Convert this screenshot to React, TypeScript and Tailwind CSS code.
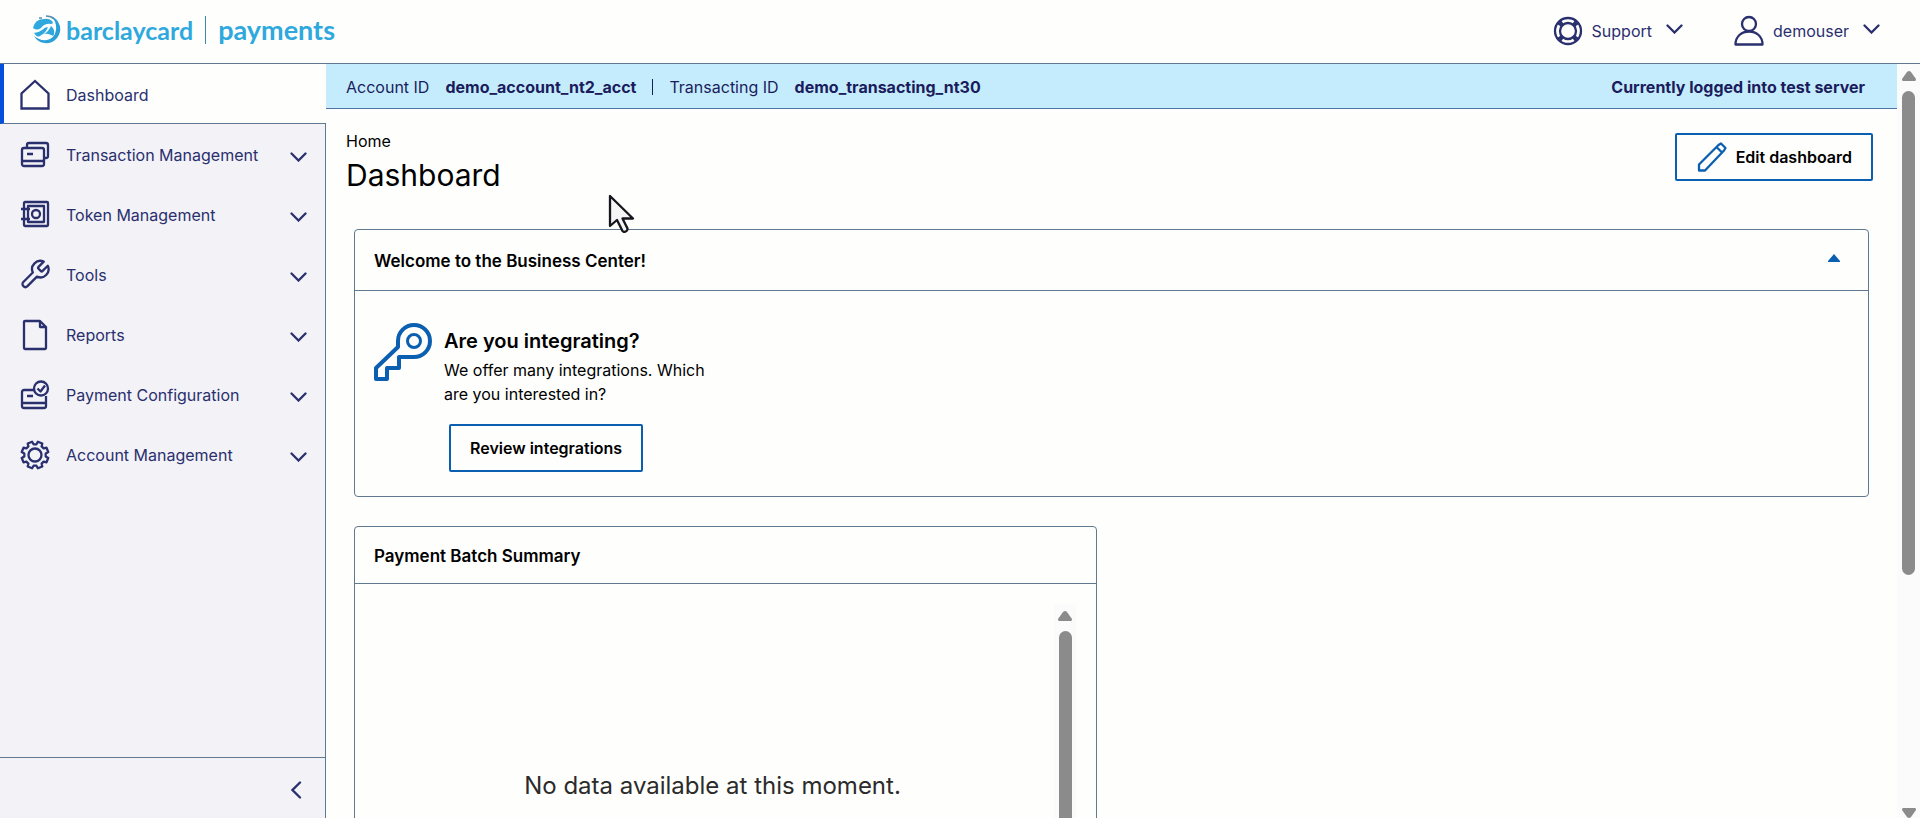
import { useState } from 'react';
import type { ReactNode } from 'react';

function Icon({ children, className = 'h-8 w-8' }: { children: ReactNode; className?: string }) {
  return (
    <svg
      viewBox="0 0 32 32"
      className={className}
      fill="none"
      stroke="currentColor"
      strokeWidth="2.3"
      strokeLinejoin="round"
      aria-hidden="true"
    >
      {children}
    </svg>
  );
}

function Chevron({ className = 'h-2 w-4' }: { className?: string }) {
  return (
    <svg
      viewBox="0 0 17 10"
      className={className}
      fill="none"
      stroke="currentColor"
      strokeWidth="2.3"
      strokeLinecap="round"
      aria-hidden="true"
    >
      <path d="M1.5 1.5l7 7 7-7" />
    </svg>
  );
}

// outline of an eight-tooth gear centred in a 32x32 box
function gearPoints() {
  const points: string[] = [];
  for (let i = 0; i < 8; i++) {
    const middle = 22.5 + i * 45;
    const corners = [
      [-15, 10.8],
      [-10, 13.6],
      [10, 13.6],
      [15, 10.8],
    ];
    corners.forEach(([offset, radius]) => {
      const angle = ((middle + offset) * Math.PI) / 180;
      points.push(`${(16 + radius * Math.sin(angle)).toFixed(1)},${(16 - radius * Math.cos(angle)).toFixed(1)}`);
    });
  }
  return points.join(' ');
}

const navItems = [
  {
    label: 'Transaction Management',
    icon: (
      <>
        <rect x="3" y="9" width="22" height="18" rx="2" />
        <path d="M3 22h22M8 15h6M8 9V6a2 2 0 0 1 2-2h17a2 2 0 0 1 2 2v11a2 2 0 0 1-2 2h-2" />
      </>
    ),
  },
  {
    label: 'Token Management',
    icon: (
      <>
        <rect x="5" y="3" width="24" height="24" rx="1" />
        <rect x="9" y="7" width="16" height="16" />
        <circle cx="17" cy="15" r="4" />
        <path d="M2 10h9M2 20h9" />
      </>
    ),
  },
  {
    label: 'Tools',
    icon: (
      <path
        d="M14.7 6.3a1 1 0 0 0 0 1.4l1.6 1.6a1 1 0 0 0 1.4 0l3.77-3.77a6 6 0 0 1-7.94 7.94l-6.91 6.91a2.12 2.12 0 0 1-3-3l6.91-6.91a6 6 0 0 1 7.94-7.94l-3.76 3.76z"
        transform="translate(-.6 -.8) scale(1.37)"
        strokeWidth="1.7"
      />
    ),
  },
  {
    label: 'Reports',
    icon: <path d="M21 2H6a1 1 0 0 0-1 1v26a1 1 0 0 0 1 1h20a1 1 0 0 0 1-1V8zM21 2v6h6" />,
  },
  {
    label: 'Payment Configuration',
    icon: (
      <>
        <path d="M15 11H5a2 2 0 0 0-2 2v14a2 2 0 0 0 2 2h20a2 2 0 0 0 2-2V17M3 24h24M8 17h6" />
        <circle cx="22" cy="9.5" r="7" />
        <path d="M18.5 9.5l3 3 4.5-6" />
      </>
    ),
  },
  {
    label: 'Account Management',
    icon: (
      <>
        <circle cx="16" cy="16" r="6.5" />
        <polygon points={gearPoints()} />
      </>
    ),
  },
];

function Logo() {
  return (
    <a href="#" className="flex items-center font-[Lato,sans-serif] leading-8 font-bold text-[#2fa9dd]">
      <svg viewBox="0 0 30 30" className="mr-1 h-[30px] w-[30px]" aria-hidden="true">
        <path d="M19 1a14 14 0 1 1-17 20q6 5 13 4 8-2 9-10Q25 7 19 1z" fill="#2a9fd8" />
        <path d="M1 13Q3 4 12 4q5-1 8 2 2 3-1 3-6-1-10 4-4 3-8 0z" fill="#2fa9dd" />
        <path d="M2 18q4 0 8-3 3-3 6-3-2 6-8 9-3 2-6-3z" fill="#2fa9dd" />
        <path d="M19 11q4 3 3 8 0 3-3 1-4-2-7-1 5-3 7-8z" fill="#2fa9dd" />
        <path d="M7 3h3M14 1q5 0 8 3" stroke="#5c8daf" strokeWidth="1.5" fill="none" />
      </svg>
      <span className="text-[25px]">barclaycard</span>
      <span className="mx-3 h-7 w-px bg-[#3f86ad]" />
      <span className="text-[27px]">payments</span>
    </a>
  );
}

function ScrollTrack({ className, thumb, down }: { className: string; thumb: string; down?: boolean }) {
  return (
    <div className={`flex flex-col items-center bg-[#fbfbfc] pt-[7px] text-[#8b8b8b] ${className}`} aria-hidden="true">
      <svg viewBox="0 0 14 10" className="h-[10px] w-[14px] shrink-0" fill="currentColor">
        <path d="M7 0q1 0 2 1l5 7q0 2-1 2H1Q0 10 0 8l5-7q1-1 2-1z" />
      </svg>
      <div className={`mt-[10px] w-[13px] rounded-full bg-[#8b8b8b] ${thumb}`} />
      {down && (
        <svg viewBox="0 0 14 10" className="mt-auto h-[10px] w-[14px] shrink-0" fill="currentColor">
          <path d="M7 10q1 0 2-1l5-7q0-2-1-2H1Q0 0 0 2l5 7q1 1 2 1z" />
        </svg>
      )}
    </div>
  );
}

export default function App() {
  const [welcomeOpen, setWelcomeOpen] = useState(true);

  return (
    <div className="relative flex h-screen flex-col overflow-hidden bg-[#fefefd] font-[Inter,sans-serif] text-base text-black">
      <header className="flex h-16 shrink-0 items-center justify-between border-b border-[#5f7991] pr-10 pb-1 pl-8">
        <Logo />
        <div className="flex items-center gap-[50px] pt-0.5 text-[#2a2f6e]">
          <button className="flex items-center gap-2">
            <Icon>
              <circle cx="16" cy="16" r="13" />
              <circle cx="16" cy="16" r="8" />
              <path d="M6 8l4 3M8 6l3 4M26 8l-4 3M24 6l-3 4M6 24l4-3M8 26l3-4M26 24l-4-3M24 26l-3-4" />
            </Icon>
            Support
            <Chevron className="mb-1 ml-1.5 h-[10px] w-[17px]" />
          </button>
          <button className="flex items-center gap-2">
            <Icon>
              <circle cx="16" cy="9" r="7" />
              <path d="M2.5 29.5c0-8 6-13 13.5-13s13.5 5 13.5 13z" />
            </Icon>
            demouser
            <Chevron className="mb-1 ml-1.5 h-[10px] w-[17px]" />
          </button>
        </div>
      </header>

      <div className="flex min-h-0 grow">
        <nav className="flex w-[326px] shrink-0 flex-col bg-[#f2f2f7] text-[#2a2f6e]">
          <a
            href="#"
            className="flex h-[60px] items-center gap-[15px] border-b border-l-4 border-b-[#5f7991] border-l-[#0450dc] bg-[#fefefd] pt-0.5 pl-[15px]"
          >
            <Icon>
              <path d="M16 2L2.5 14.5V29.5h27V14.5z" strokeLinejoin="miter" />
            </Icon>
            Dashboard
          </a>
          <div className="grow border-r border-[#5f7991]">
            {navItems.map((item) => (
              <button
                key={item.label}
                className="flex h-[60px] w-full items-center gap-[15px] pt-0.5 pr-[18px] pl-[19px] text-left"
              >
                <Icon>{item.icon}</Icon>
                <span className="grow">{item.label}</span>
                <Chevron className="mt-1 h-[10px] w-[17px]" />
              </button>
            ))}
          </div>
          <div className="flex h-[61px] items-center justify-end border-t border-r border-[#5f7991] pt-1 pr-[23px]">
            <button aria-label="Collapse menu">
              <svg
                viewBox="0 0 11 18"
                className="h-[18px] w-[11px]"
                fill="none"
                stroke="currentColor"
                strokeWidth="2.3"
                strokeLinecap="round"
              >
                <path d="M9 1.5L1.5 9 9 16.5" />
              </svg>
            </button>
          </div>
        </nav>

        <main className="min-w-0 grow overflow-hidden">
          <div className="flex h-[45px] items-center border-b border-[#4f76a3] bg-[#c5ecfd] pt-0.5 pr-8 pl-5 text-[#1a1c5c]">
            <span>Account ID</span>
            <strong className="ml-4 font-bold">demo_account_nt2_acct</strong>
            <span className="mx-4 h-4 w-px bg-[#1a1c5c]" />
            <span>Transacting ID</span>
            <strong className="ml-4 font-bold">demo_transacting_nt30</strong>
            <strong className="ml-auto font-bold">Currently logged into test server</strong>
          </div>

          <div className="flex items-start justify-between pt-5 pr-6 pl-5">
            <div>
              <a href="#">Home</a>
              <h1 className="text-[30px] leading-[44px]">Dashboard</h1>
            </div>
            <button className="mt-1 flex h-12 items-center gap-2 rounded-xs border-2 border-[#0a5fb0] px-[19px] font-semibold">
              <Icon className="h-8 w-8 text-[#0a5fb0]">
                <path d="M3 29.5v-6L22.5 4 25 2.5l4.500 4.500L28 9.500 9 29.500zM20.500 6l5.500 5.500" />
              </Icon>
              Edit dashboard
            </button>
          </div>

          <section className="mx-7 mt-8 rounded border border-[#5f7991]">
            <div className="flex h-[61px] items-center justify-between border-b border-[#5f7991] pr-7 pl-[19px]">
              <h2 className="pt-1 text-[17px] font-semibold">Welcome to the Business Center!</h2>
              <button aria-label="Toggle welcome panel" className="pb-1" onClick={() => setWelcomeOpen(!welcomeOpen)}>
                <svg viewBox="0 0 12 8" className="h-2 w-3" fill="#0a5fb0">
                  <path d="M6 0l6 7v1H0V7z" />
                </svg>
              </button>
            </div>
            {welcomeOpen && (
              <div className="flex h-[205px] items-start gap-3 pt-8 pl-[19px]">
                <svg
                  viewBox="0 0 58 58"
                  className="h-[58px] w-[58px] text-[#0a5fb0]"
                  fill="none"
                  stroke="currentColor"
                  strokeWidth="4"
                  strokeLinejoin="round"
                >
                  <circle cx="40" cy="18" r="6.5" strokeWidth="3" />
                  <path d="M24 24V18A16 16 0 1 1 40 34H25V45H13V56H2V45z" />
                </svg>
                <div className="pt-1">
                  <h3 className="text-xl font-semibold">Are you integrating?</h3>
                  <p className="mt-[3px] w-[280px]">We offer many integrations. Which are you interested in?</p>
                  <button className="mt-[18px] ml-[5px] h-12 rounded-xs border-2 border-[#0a5fb0] px-[19px] font-semibold">
                    Review integrations
                  </button>
                </div>
              </div>
            )}
          </section>

          <section className="mt-[29px] ml-7 w-[743px] rounded border border-[#5f7991]">
            <h2 className="flex h-[57px] items-center border-b border-[#5f7991] pt-1 pl-[19px] text-[17px] font-semibold">
              Payment Batch Summary
            </h2>
            <div className="flex h-[400px] pt-5 pr-5 pl-4">
              <p className="grow pt-[166px] text-center text-2xl text-[#2b2b2b]">No data available at this moment.</p>
              <ScrollTrack className="w-[22px]" thumb="h-[320px]" />
            </div>
          </section>
        </main>

        <ScrollTrack className="w-[23px] shrink-0" thumb="h-[484px]" down />
      </div>

      <svg
        viewBox="0 0 27 39"
        className="pointer-events-none absolute top-[194px] left-[608px] h-[39px] w-[27px]"
        aria-hidden="true"
      >
        <path
          d="M2 2v30l7-6 5.5 11q2 2 4.5-.5 1-1.5 0-3L14.5 24.5H25z"
          fill="#f5f5f7"
          stroke="#15151d"
          strokeWidth="2.3"
          strokeLinejoin="round"
        />
      </svg>
    </div>
  );
}
